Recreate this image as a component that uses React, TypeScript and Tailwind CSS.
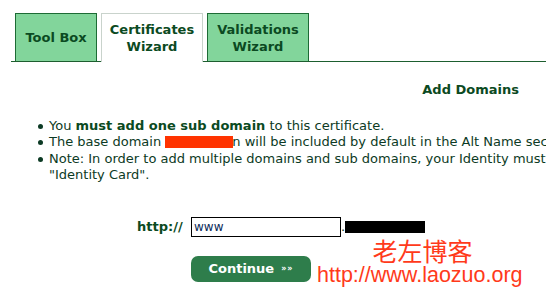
export default function App() {
  const tabBase =
    "flex items-center justify-center text-center font-bold text-[13px] leading-[17px] text-[#0b4a22] border border-[#1d6b35] border-b-0";
  return (
    <div className="w-[546px] h-[294px] overflow-hidden bg-white font-['DejaVu_Sans',sans-serif] text-[#0c3a24]">
      <div className="pt-[13px] pl-[11px]">
        <div className="flex items-end border-b border-[#1d5e2f]">
          <div className="w-[4px]" />
          <div className={`${tabBase} w-[82px] h-[48px] bg-[#82d59b]`}>Tool Box</div>
          <div className="w-[4px]" />
          <div className={`${tabBase} w-[102px] h-[49px] -mb-px bg-white border-[#c9d3cc] text-[#0b4a22]`}>
            Certificates
            <br />
            Wizard
          </div>
          <div className="w-[4px]" />
          <div className={`${tabBase} w-[102px] h-[48px] bg-[#82d59b]`}>
            Validations
            <br />
            Wizard
          </div>
        </div>
      </div>

      <div className="flex justify-end pr-[27px] pt-[18px]">
        <h2 className="font-bold text-[13px] text-[#0b4a22]">Add Domains</h2>
      </div>

      <ul className="mt-[18px] pl-[49px] text-[13px] leading-[16.5px] whitespace-nowrap">
        <li className="relative">
          <span className="absolute -left-[11px] top-[6px] w-[5px] h-[5px] rounded-full bg-[#0c3a24]" />
          You <b className="text-[#0b4a22]">must add one sub domain</b> to this certificate.
        </li>
        <li className="relative">
          <span className="absolute -left-[11px] top-[6px] w-[5px] h-[5px] rounded-full bg-[#0c3a24]" />
          The base domain{" "}
          <span className="inline-block align-middle w-[68px] h-[12px] -mt-[2px] bg-[#ff3300]" />
          <span className="-ml-[1px]">n</span> will be included by default in the Alt Name section
        </li>
        <li className="relative">
          <span className="absolute -left-[11px] top-[6px] w-[5px] h-[5px] rounded-full bg-[#0c3a24]" />
          Note: In order to add multiple domains and sub domains, your Identity must be
          <br />
          "Identity Card".
        </li>
      </ul>

      <div className="flex items-center mt-[33px] pl-[137px]">
        <span className="font-bold text-[13px] text-[#0b4a22] w-[54px]">http://</span>
        <div className="w-[150px] h-[20px] border border-black px-[2px] text-[12px] leading-[18px] text-[#0a2a5a]">
          www
        </div>
        <span className="text-[13px]">.</span>
        <span className="w-[80px] h-[12px] bg-black" />
      </div>

      <div className="flex pl-[191px] mt-[4px]">
        <div className="flex flex-col">
          <div className="h-[15px]" />
          <button className="w-[120px] h-[26px] rounded-[7px] bg-[#2e7d4b] text-white font-bold text-[13px] flex items-center justify-center gap-[7px]">
            Continue <span className="text-[8px] tracking-[1px]">»»</span>
          </button>
        </div>
        <div className="flex flex-col items-end ml-[6px] -mt-[3px] text-[#ff3a1a] font-['Noto_Sans_CJK_SC','Liberation_Sans',sans-serif]">
          <span className="text-[25px] leading-[25px] pr-[54px]">老左博客</span>
          <span className="text-[21.5px] leading-[25px] font-['Liberation_Sans',sans-serif] pr-[4px]">
            http://www.laozuo.org
          </span>
        </div>
      </div>
    </div>
  );
}
